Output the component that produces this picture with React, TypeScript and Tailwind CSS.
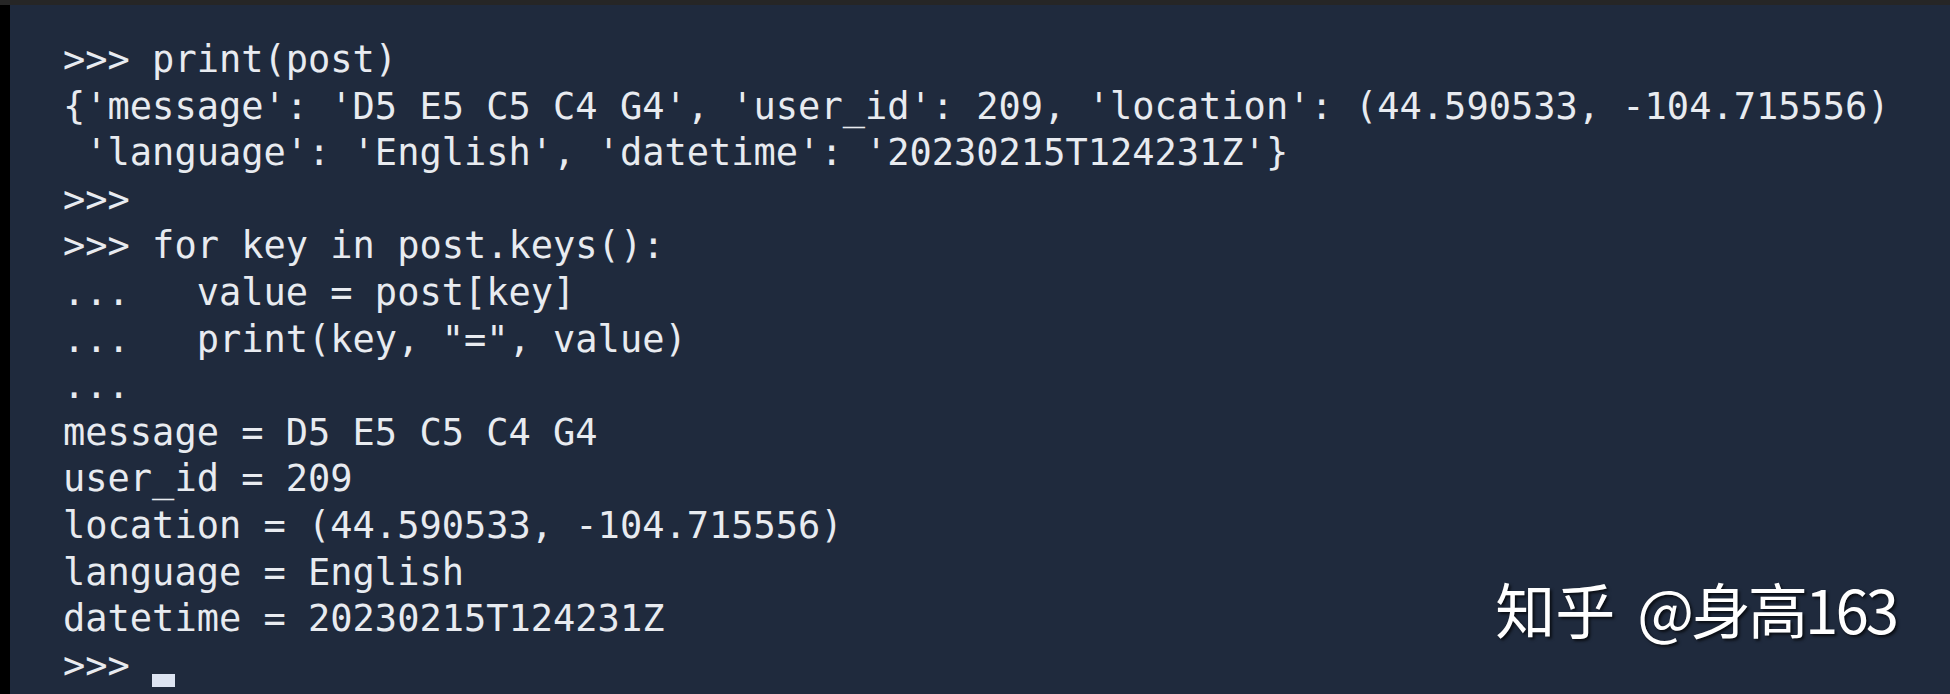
import React from "react";

const lines: string[] = [
  ">>> print(post)",
  "{'message': 'D5 E5 C5 C4 G4', 'user_id': 209, 'location': (44.590533, -104.715556)",
  " 'language': 'English', 'datetime': '20230215T124231Z'}",
  ">>>",
  ">>> for key in post.keys():",
  "...   value = post[key]",
  "...   print(key, \"=\", value)",
  "...",
  "message = D5 E5 C5 C4 G4",
  "user_id = 209",
  "location = (44.590533, -104.715556)",
  "language = English",
  "datetime = 20230215T124231Z",
];

export default function App() {
  return (
    <div className="w-[1950px] h-[694px] flex flex-col bg-[#1f2a3d] overflow-hidden">
      <div className="h-[5px] bg-[#262626] shrink-0" />
      <div className="flex flex-1 relative">
        <div className="w-[10px] bg-black shrink-0" />
        <div className="flex-1 pl-[53px] pt-[32px] font-['DejaVu_Sans_Mono',monospace] text-[37px] leading-[46.6px] text-[#e8ebf0] whitespace-pre">
          {lines.map((l, i) => (
            <div key={i} className="h-[46.6px]">
              {l}
            </div>
          ))}
          <div className="h-[46.6px] flex">
            <span>{">>> "}</span>
            <span className="mt-[31px] w-[23px] h-[13px] bg-[#dde4f2]" />
          </div>
        </div>
        <div className="absolute right-[54px] bottom-[56px] flex font-['Noto_Sans_CJK_SC',sans-serif] text-[60px] leading-[60px] text-white [text-shadow:2px_2px_3px_rgba(0,0,0,0.7)] whitespace-pre">
          <span>知乎</span>
          <span className="ml-[22px] tracking-[-3px]">@身高163</span>
        </div>
      </div>
    </div>
  );
}
